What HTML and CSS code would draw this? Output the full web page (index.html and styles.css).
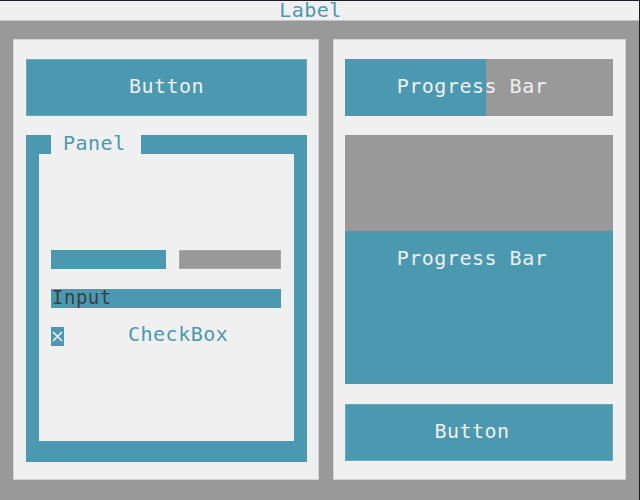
FILE: index.html
```html
<!DOCTYPE html>
<html lang="en">
<head>
    <meta charset="UTF-8">
    <title>Controls</title>
    <link rel="stylesheet" href="styles.css">
</head>
<body>
    <div class="window">
        <!-- top label strip -->
        <header class="titlebar">
            <span class="title">Label</span>
        </header>

        <main class="desk">
            <!-- left pane -->
            <section class="pane pane-left">
                <button class="btn">Button</button>

                <div class="group">
                    <span class="group-title">Panel</span>
                    <div class="group-body">
                        <div class="slider">
                            <span class="slider-fill"></span>
                            <span class="slider-rest"></span>
                        </div>
                        <div class="input">Input</div>
                        <label class="check">
                            <span class="check-box">
                                <svg width="13" height="19" viewBox="0 0 13 19">
                                    <path d="M2 5 L11 14 M11 5 L2 14" stroke="#f0f0f0" stroke-width="1.6" fill="none"/>
                                </svg>
                            </span>
                            <span class="check-text">CheckBox</span>
                        </label>
                    </div>
                </div>
            </section>

            <!-- right pane -->
            <section class="pane pane-right">
                <div class="progress">
                    <span class="progress-fill" style="width: 52.6%"></span>
                    <span class="progress-text">Progress Bar</span>
                </div>

                <div class="vprogress">
                    <span class="vprogress-fill" style="height: 61.4%"></span>
                    <span class="progress-text">Progress Bar</span>
                </div>

                <button class="btn">Button</button>
            </section>
        </main>
    </div>
</body>
</html>
```

FILE: styles.css
```css
:root{
    --blue: #4b99b1;
    --gray: #999999;
    --light: #f0f0f0;
    --line: #cfd3d4;
    --dark: #1c1c28;
}

*{
    box-sizing: border-box;
}

body{
    margin: 0;
    font-family: "DejaVu Sans Mono", "Liberation Mono", monospace;
    font-size: 20px;
    letter-spacing: 0.5px;
}

.window{
    min-height: 100vh;
    background-color: var(--gray);
    border-right: 1px solid var(--dark);
}

/* label strip */
.titlebar{
    height: 21px;
    background-color: var(--light);
    border-top: 1px solid var(--dark);
    border-bottom: 1px solid #c4c4c4;
    text-align: center;
}
.title{
    display: block;
    line-height: 19px;
    color: var(--blue);
    padding-right: 18px;
}

.desk{
    display: flex;
    gap: 14px;
    padding: 18px 0 0 13px;
}

.pane{
    display: flex;
    flex-direction: column;
    height: 441px;
    background-color: var(--light);
    border: 1px solid var(--line);
}
.pane-left{
    width: 306px;
    padding: 19px 11px 0 12px;
}
.pane-right{
    width: 293px;
    padding: 19px 12px 0 11px;
    gap: 19px;
}
.pane-right .btn{
    margin-top: 1px;
    padding-right: 14px;
}

.btn{
    height: 57px;
    padding: 0 0 3px;
    border: 1px solid #6aa9bd;
    background-color: var(--blue);
    color: var(--light);
    font: inherit;
    letter-spacing: inherit;
}

/* panel group */
.group{
    position: relative;
    height: 327px;
    margin-top: 19px;
    padding: 19px 13px 21px;
    background-color: var(--blue);
}
.group-title{
    position: absolute;
    top: 0;
    left: 25px;
    width: 90px;
    height: 19px;
    padding-left: 12px;
    line-height: 16px;
    background-color: var(--light);
    color: var(--blue);
}
.group-body{
    height: 100%;
    padding: 96px 13px 0 12px;
    background-color: var(--light);
}

.slider{
    display: flex;
    gap: 13px;
    height: 19px;
}
.slider-fill{
    width: 115px;
    background-color: var(--blue);
}
.slider-rest{
    flex: 1;
    background-color: var(--gray);
    border: 1px solid #a8a8a8;
}

.input{
    height: 19px;
    margin-top: 20px;
    padding-left: 1px;
    line-height: 17px;
    font-size: 19px;
    background-color: var(--blue);
    color: #3a3f42;
}

.check{
    display: flex;
    align-items: flex-start;
    height: 19px;
    margin-top: 19px;
}
.check-box{
    display: block;
    width: 13px;
    height: 19px;
    background-color: var(--blue);
}
.check-box svg{
    display: block;
}
.check-text{
    margin: -2px 0 0 64px;
    line-height: 19px;
    color: var(--blue);
}

/* progress bars */
.progress,
.vprogress{
    display: grid;
    background-color: var(--gray);
    color: var(--light);
}
.progress{
    height: 57px;
}
.vprogress{
    height: 249px;
}
.progress > *,
.vprogress > *{
    grid-area: 1 / 1;
}
.progress-fill{
    justify-self: start;
    height: 100%;
    background-color: var(--blue);
}
.vprogress-fill{
    align-self: end;
    width: 100%;
    background-color: var(--blue);
}
.progress-text{
    align-self: center;
    justify-self: center;
    padding: 0 14px 3px 0;
}
```
